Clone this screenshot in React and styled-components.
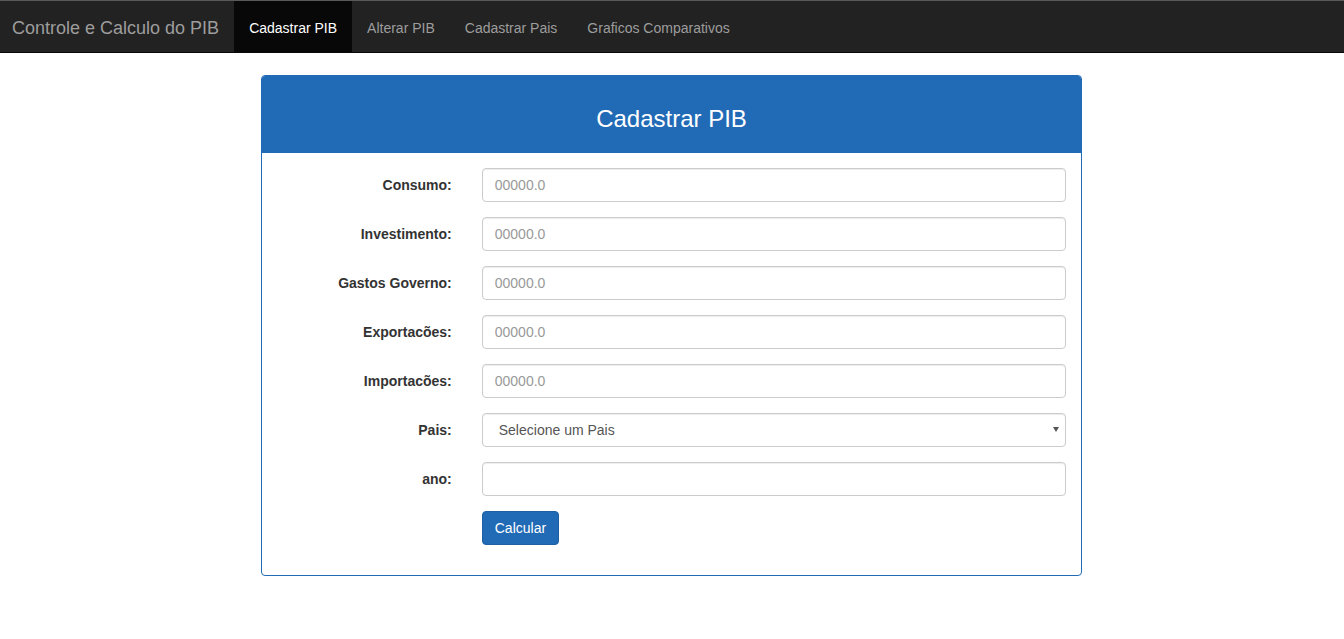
import React from 'react';
import styled, { createGlobalStyle } from 'styled-components';

const GlobalStyle = createGlobalStyle`
    body {
        margin: 0;
        font-family: "Liberation Sans", Arial, sans-serif;
        font-size: 14px;
        line-height: 1.42857;
        color: #333;
        background: #fff;
    }
    * { box-sizing: border-box; }
`;

const Navbar = styled.nav`
    display: flex;
    align-items: stretch;
    height: 53px;
    background-color: #222;
    border-top: 1px solid #5a5a5a;
    border-bottom: 1px solid #080808;
`;

const Brand = styled.a`
    display: flex;
    align-items: center;
    padding: 5px 15px 0 12px;
    font-size: 18px;
    color: #9d9d9d;
    text-decoration: none;
`;

const NavLink = styled.a`
    display: flex;
    align-items: center;
    padding: 5px 15px 0;
    color: ${(p) => (p.active ? '#fff' : '#9d9d9d')};
    background-color: ${(p) => (p.active ? '#080808' : 'transparent')};
    text-decoration: none;
    cursor: pointer;
`;

const Panel = styled.div`
    width: 821px;
    margin: 22px 0 0 calc(50% - 411px);
    border: 1px solid #216ab6;
    border-radius: 4px;
    background: #fff;
`;

const PanelHeading = styled.div`
    background-color: #216ab6;
    color: #fff;
    padding: 30px 15px 21px;
    text-align: center;
    border-radius: 3px 3px 0 0;
`;

const PanelTitle = styled.h3`
    margin: 0;
    font-size: 24px;
    font-weight: 500;
    line-height: 26px;
`;

const PanelBody = styled.form`
    padding: 15px 0;
`;

const FormGroup = styled.div`
    display: grid;
    grid-template-columns: 25% 75%;
    margin-bottom: 15px;
`;

const Label = styled.label`
    padding: 8px 15px 0;
    text-align: right;
    font-weight: bold;
`;

const Field = styled.div`
    position: relative;
    padding: 0 15px;
`;

const Input = styled.input`
    display: block;
    width: 100%;
    height: 34px;
    padding: 6px 12px;
    font-family: inherit;
    font-size: 14px;
    color: #555;
    border: 1px solid #ccc;
    border-radius: 4px;
    box-shadow: inset 0 1px 1px rgba(0, 0, 0, 0.075);
    outline: none;

    &::placeholder {
        color: #999;
    }
`;

const Select = styled.select`
    display: block;
    width: 100%;
    height: 34px;
    padding: 6px 16px;
    font-family: inherit;
    font-size: 14px;
    color: #555;
    background: #fff;
    border: 1px solid #ccc;
    border-radius: 4px;
    box-shadow: inset 0 1px 1px rgba(0, 0, 0, 0.075);
    appearance: none;
    outline: none;
`;

const Caret = styled.span`
    position: absolute;
    right: 22px;
    top: 14px;
    width: 0;
    height: 0;
    border-left: 3px solid transparent;
    border-right: 3px solid transparent;
    border-top: 5px solid #555;
    pointer-events: none;
`;

const Button = styled.button`
    height: 34px;
    padding: 6px 12px;
    font-family: inherit;
    font-size: 14px;
    color: #fff;
    background-color: #216ab6;
    border: 1px solid #1e5fa3;
    border-radius: 4px;
    cursor: pointer;
`;

const fields = [
    { label: 'Consumo:', placeholder: '00000.0' },
    { label: 'Investimento:', placeholder: '00000.0' },
    { label: 'Gastos Governo:', placeholder: '00000.0' },
    { label: 'Exportacões:', placeholder: '00000.0' },
    { label: 'Importacões:', placeholder: '00000.0' },
];

function App() {
    return (
        <>
            <GlobalStyle />
            <Navbar>
                <Brand>Controle e Calculo do PIB</Brand>
                <NavLink active>Cadastrar PIB</NavLink>
                <NavLink>Alterar PIB</NavLink>
                <NavLink>Cadastrar Pais</NavLink>
                <NavLink>Graficos Comparativos</NavLink>
            </Navbar>
            <Panel>
                <PanelHeading>
                    <PanelTitle>Cadastrar PIB</PanelTitle>
                </PanelHeading>
                <PanelBody onSubmit={(e) => e.preventDefault()}>
                    {fields.map((f) => (
                        <FormGroup key={f.label}>
                            <Label>{f.label}</Label>
                            <Field>
                                <Input placeholder={f.placeholder} />
                            </Field>
                        </FormGroup>
                    ))}
                    <FormGroup>
                        <Label>Pais:</Label>
                        <Field>
                            <Select defaultValue="">
                                <option value="">Selecione um Pais</option>
                            </Select>
                            <Caret />
                        </Field>
                    </FormGroup>
                    <FormGroup>
                        <Label>ano:</Label>
                        <Field>
                            <Input />
                        </Field>
                    </FormGroup>
                    <FormGroup>
                        <div />
                        <Field>
                            <Button type="submit">Calcular</Button>
                        </Field>
                    </FormGroup>
                </PanelBody>
            </Panel>
        </>
    );
}

export default App;
